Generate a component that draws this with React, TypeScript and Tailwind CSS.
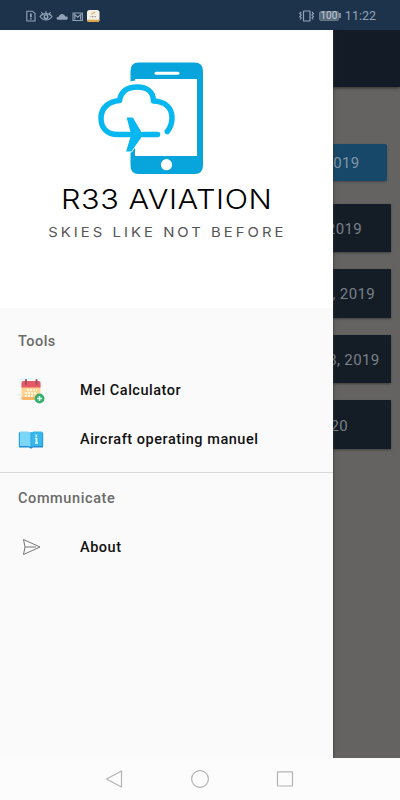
import React from "react";

const dates = [
  { label: "4, 2019", pad: "pr-[29px]" },
  { label: "8, 2019", pad: "pr-[16px]" },
  { label: "18, 2019", pad: "pr-[11.5px]" },
  { label: "5, 2020", pad: "pr-[43px]" },
];

function StatusBar() {
  return (
    <header className="flex h-[30px] shrink-0 items-center justify-between bg-[#1d334c] pl-[25px] pr-[24px] pt-px text-[#93a3b5]">
      <svg width="76" height="14" viewBox="0 0 76 14" fill="none" stroke="#93a3b5" strokeWidth="1.1">
        <path d="M1.8 2.2H7.5L10 4.6V12H1.8Z" />
        <path d="M5.9 4.6V8.2M5.9 9.2V10.6" strokeWidth="1.8" />
        <path d="M15 7.5C18 3.6 24 3.6 27 7.5C24 12 18 12 15 7.5Z" />
        <circle cx="21" cy="7.7" r="1.8" strokeWidth="1.4" />
        <path d="M16.3 3.2L17.8 5M21 2V4M25.7 3.2L24.2 5" />
        <path d="M34.2 10.8C30.7 10.8 30.8 7.8 33.8 7.7C34.6 4.3 39.2 4.2 40 7.2C43.6 7 43.8 10.8 40.8 10.8Z" fill="#93a3b5" stroke="none" />
        <path d="M48 4H57.4V11.5H48ZM49 5L52.7 8.2L56.4 5M49.8 6V10.5M55.6 6V10.5" strokeWidth="1.1" />
        <rect x="62" y="1" width="12.5" height="12" rx="2.5" fill="#f4efe5" stroke="none" />
        <path d="M62 10.7H74.5V11Q74.5 13 72 13H64.5Q62 13 62 11Z" fill="#daa449" stroke="none" />
        <path d="M66.5 5.5C67 3 69 5 70 3" stroke="#e0a64a" />
        <path d="M65.5 7.6H71" stroke="#9c9e9f" strokeWidth="1.3" strokeDasharray="1 .5" />
      </svg>
      <div className="flex items-center">
        <svg width="16" height="14" viewBox="0 0 16 14" fill="none" stroke="#93a3b5" strokeWidth="1.2">
          <rect x="4.5" y="2" width="6.5" height="10" rx=".6" />
          <path d="M2.2 3L.8 4.5L2.2 6L.8 7.5L2.2 9L1 10.5M13 3L14.4 4.5L13 6L14.4 7.5L13 9L14.2 10.5" />
        </svg>
        <div className="ml-[4px] flex h-[10px] w-[20px] items-center justify-center rounded-[2px] border border-[#65778a] bg-[#56697b] text-[10px] leading-none text-[#c0cad3]">100</div>
        <div className="mr-[4px] h-[5px] w-[2px] bg-[#7e8e9f]" />
        <span className="text-[12.5px] leading-[18px]">11:22</span>
      </div>
    </header>
  );
}

function Logo() {
  return (
    <svg className="shrink-0" width="112" height="116" viewBox="0 0 112 116" fill="none">
      <path fillRule="evenodd" fill="#08a4dc" d="M41.5 2.5H97.5Q106 2.5 106 11V105.5Q106 114 97.5 114H41.5Q33.5 114 33.5 105.5V11Q33.5 2.5 41.5 2.5ZM38 19V96H100V19Z" />
      <path d="M59 13.2H81" stroke="white" strokeWidth="3" strokeLinecap="round" />
      <circle cx="69.5" cy="104.7" r="5.6" fill="white" />
      <path d="M61 74.5H21C9 74.5 4 67 4 57C4 47 11 40 22.5 40.5C24 29 31 24 40.5 24C50 24 56 30 56.5 40C68 40 77 47 77 58C77 64 76 68 70.5 71V75H61Z" fill="white" />
      <path d="M22.5 40.5C24 29 31 24 40.5 24C50 24 56 30 56.5 40" stroke="white" strokeWidth="7" />
      <path d="M30 71H41V84H30Z" fill="white" />
      <path d="M60.5 74.5H21C9.5 74.5 4 67.5 4 58C4 48 11.5 41.5 22.5 40.5C24 31 31 27 40.5 27C50 27 56.3 32 56.5 41C68.5 41.5 75 48 75 58C75 64 73.5 67.5 70.3 71.5" stroke="#06b8ef" strokeWidth="5.5" strokeLinecap="round" strokeLinejoin="round" />
      <path d="M29 57H36L45.5 73V76.5L34.5 92H28.5L33 76.5V72Z" fill="#06b8ef" stroke="white" strokeWidth="1" />
      <path d="M24 74.5H60" stroke="#06b8ef" strokeWidth="5" strokeLinecap="round" />
    </svg>
  );
}

function CalendarIcon() {
  return (
    <svg width="28" height="26" viewBox="0 0 28 26" fill="none">
      <path d="M2 1H15M1 4H24M0 17H20M1 21H18" stroke="#c7f1f4" />
      <rect x="3.5" y="4" width="19" height="18" rx="2" fill="#ffd391" />
      <path d="M3.5 9.5V5Q3.5 3 5.5 3H20.5Q22.5 3 22.5 5V9.5Z" fill="#e85766" />
      <path d="M3.5 19V20Q3.5 22 5.5 22H18V19Z" fill="#fab568" />
      <path d="M8 2V6M18.5 2V6" stroke="#945765" strokeWidth="2" strokeLinecap="round" />
      <path d="M9 12H19M7 15H19M7 18H16" stroke="#fff5df" strokeWidth="2" strokeDasharray="2 1" />
      <circle cx="21.5" cy="20.5" r="4.9" fill="#38ae70" />
      <path d="M21.5 18V23M19 20.5H24" stroke="#d5ffe5" strokeWidth="1.5" />
    </svg>
  );
}

function BookIcon() {
  return (
    <svg width="26" height="20" viewBox="0 0 26 20" fill="none">
      <path d="M1 2.5H25V17.5H15L13 18.7L11 17.5H1Z" fill="#228cd2" />
      <path d="M2 1.5H10L13 2.5V17L10 16H2Z" fill="#7cd6f8" />
      <path d="M13 2.5L16 1.5H24V16H16L13 17Z" fill="#39b7ed" />
      <path d="M1.3 2.5V16.5M24.7 2.5V16.5M13 2.5V17" stroke="#2ba7e1" />
      <path d="M18.3 4.5V6.8M17.2 8.5H18.5V13M17 13H20" stroke="#e1ffff" strokeWidth="1.7" />
    </svg>
  );
}

function MenuItem({ icon, children }: { icon: React.ReactNode; children: React.ReactNode }) {
  return (
    <div className="flex h-[49px] items-center pl-[18px] text-[14.5px] font-medium text-[#111]">
      <span className="flex w-[62px] items-center">{icon}</span>
      <span className="tracking-[0.52px]">{children}</span>
    </div>
  );
}

export default function App() {
  return (
    <div className="flex h-[800px] w-[400px] flex-col overflow-hidden bg-[#fcfcfc] font-['Roboto',sans-serif]">
      <StatusBar />
      <main className="relative h-[728px] shrink-0 overflow-hidden bg-[#646361]">
        <div className="h-[57px] bg-[#131b26] shadow-[0_1px_3px_#30302f]" />
        <div className="flex flex-col px-[9px] pt-[57px] text-[15px] tracking-[0.35px] text-[#7a8086]">
          <div className="mr-[4.5px] flex h-[37px] items-center justify-end rounded-[2px] bg-[#174869] pr-[27px] pt-[2px] text-[#8297a5] shadow-[0_1px_2px_#42494c]">2019</div>
          <div className="mt-[22.7px] flex flex-col gap-[17px]">
            {dates.map((date) => (
              <div key={date.label} className={"flex h-[48.6px] items-center justify-end bg-[#141c26] pt-[2px] shadow-[0_1px_2px_#3e4040] " + date.pad}>
                {date.label}
              </div>
            ))}
          </div>
        </div>
        <aside className="absolute inset-y-0 left-0 w-[333px] bg-[#fafafa] shadow-[0_0_3px_#333]">
          <div className="flex h-[278px] flex-col items-center bg-white pt-[30px]">
            <div className="pr-[28px]"><Logo /></div>
            <h1 className="mt-[5px] scale-x-[1.115] whitespace-nowrap font-['Inter',sans-serif] text-[27.5px] font-light leading-[36px] tracking-[0.5px] text-black">R33 AVIATION</h1>
            <p className="mt-[4.5px] scale-x-[1.1] whitespace-nowrap pl-[2px] font-['Inter',sans-serif] text-[13.5px] font-normal leading-[20px] tracking-[2.75px] text-[#555]">SKIES LIKE NOT BEFORE</p>
          </div>
          <nav>
            <h2 className="flex h-[58px] items-center pl-[18px] pt-[9px] text-[14.5px] font-medium tracking-[0.45px] text-[#6b6b6b]">Tools</h2>
            <MenuItem icon={<CalendarIcon />}>Mel Calculator</MenuItem>
            <MenuItem icon={<BookIcon />}>Aircraft operating manuel</MenuItem>
            <div className="mt-[8px] h-px bg-[#d7d7d7]" />
            <h2 className="flex h-[50px] items-center pl-[18px] pt-px text-[14.5px] font-medium tracking-[0.6px] text-[#6b6b6b]">Communicate</h2>
            <MenuItem icon={<svg className="mb-[2px]" width="26" height="22" viewBox="0 0 26 22" fill="none" stroke="#686868" strokeWidth=".9" strokeLinejoin="round"><path d="M5.5 3.5L22 11L5.5 18.5L7 11ZM7 11H18" /></svg>}>About</MenuItem>
          </nav>
        </aside>
      </main>
      <footer className="flex flex-1 items-center justify-center gap-[65.5px] bg-[#fcfcfc]">
        <svg width="20" height="20" viewBox="0 0 20 20" fill="none" stroke="#b2b2b2" strokeWidth="1.2" strokeLinejoin="round"><path d="M16.5 2V18L1.5 10Z" /></svg>
        <svg width="20" height="20" viewBox="0 0 20 20" fill="none" stroke="#b2b2b2" strokeWidth="1.2"><circle cx="10" cy="10" r="8.4" /></svg>
        <svg width="20" height="20" viewBox="0 0 20 20" fill="none" stroke="#b2b2b2" strokeWidth="1.2"><rect x="1.5" y="2.8" width="15" height="14.2" rx=".5" /></svg>
      </footer>
    </div>
  );
}
